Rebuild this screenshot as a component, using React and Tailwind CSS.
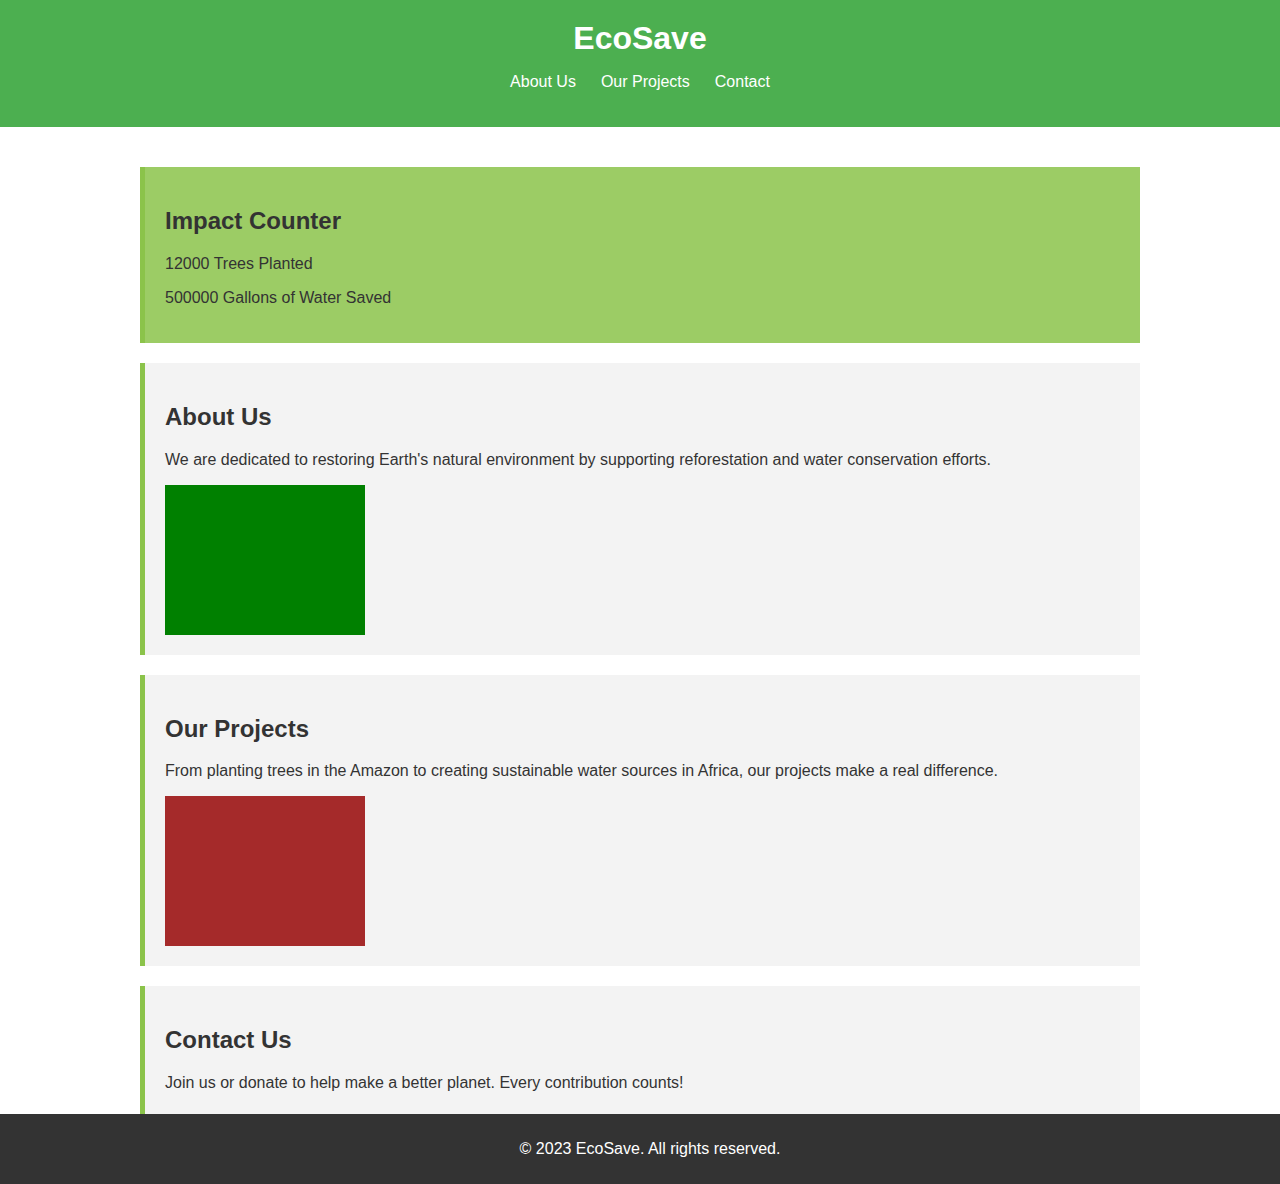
export default function App() {
  const font = { fontFamily: '"Liberation Sans", Arial, sans-serif' };
  return (
    <div className="min-h-[1184px] bg-white text-[#333333] text-[16px] leading-[normal]" style={font}>
      <header className="bg-[#4CAF50] text-white text-center py-5">
        <h1 className="text-[32px] font-bold leading-[37px] m-0">EcoSave</h1>
        <nav className="my-4">
          <ul className="flex justify-center gap-[25px] leading-[18px]">
            <li><a className="text-white">About Us</a></li>
            <li><a className="text-white">Our Projects</a></li>
            <li><a className="text-white">Contact</a></li>
          </ul>
        </nav>
      </header>
      <main className="max-w-[1000px] mx-auto mt-10 flex flex-col gap-5">
        <section className="bg-[#9CCC65] border-l-[5px] border-[#8BC34A] p-5">
          <h2 className="text-[24px] font-bold leading-[28px] mt-[19.92px] mb-[19.92px]">Impact Counter</h2>
          <p className="leading-[18px] mb-4">12000 Trees Planted</p>
          <p className="leading-[18px] mb-4">500000 Gallons of Water Saved</p>
        </section>
        <section className="bg-[#f3f3f3] border-l-[5px] border-[#8BC34A] p-5">
          <h2 className="text-[24px] font-bold leading-[28px] mt-[19.92px] mb-[19.92px]">About Us</h2>
          <p className="leading-[18px] mb-4">We are dedicated to restoring Earth's natural environment by supporting reforestation and water conservation efforts.</p>
          <div className="w-[200px] h-[150px] bg-[#008000]"></div>
        </section>
        <section className="bg-[#f3f3f3] border-l-[5px] border-[#8BC34A] p-5">
          <h2 className="text-[24px] font-bold leading-[28px] mt-[19.92px] mb-[19.92px]">Our Projects</h2>
          <p className="leading-[18px] mb-4">From planting trees in the Amazon to creating sustainable water sources in Africa, our projects make a real difference.</p>
          <div className="w-[200px] h-[150px] bg-[#A52A2A]"></div>
        </section>
        <section className="bg-[#f3f3f3] border-l-[5px] border-[#8BC34A] p-5">
          <h2 className="text-[24px] font-bold leading-[28px] mt-[19.92px] mb-[19.92px]">Contact Us</h2>
          <p className="leading-[18px] mb-4">Join us or donate to help make a better planet. Every contribution counts!</p>
        </section>
      </main>
      <footer className="fixed bottom-0 left-0 right-0 h-[70px] bg-[#333333] text-white flex items-center justify-center pl-5">
        <p className="leading-[18px]">© 2023 EcoSave. All rights reserved.</p>
      </footer>
    </div>
  );
}
